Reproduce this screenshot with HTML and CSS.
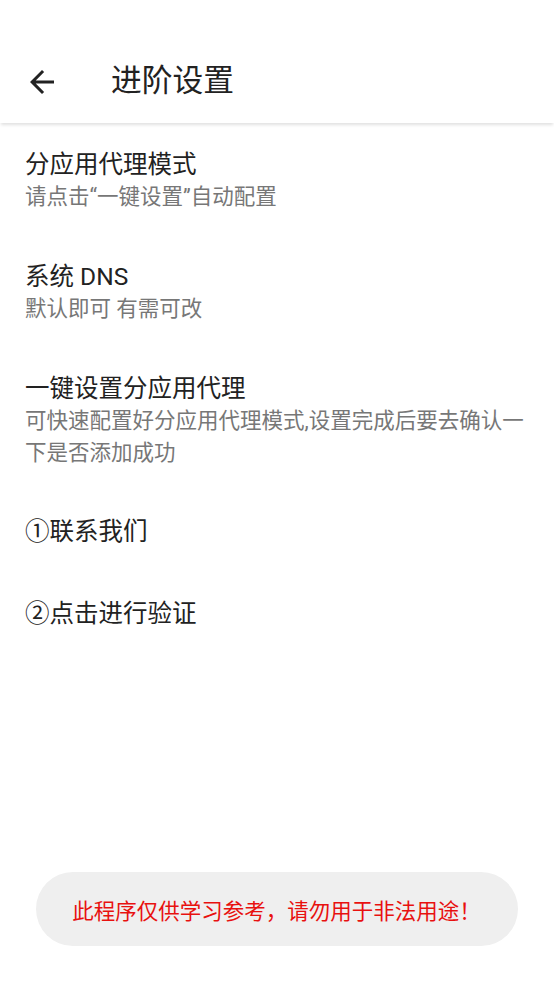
FILE: index.html
```html
<html lang="zh-CN">
<head>
	<meta charset="UTF-8">
	<title>进阶设置</title>
	<link rel="stylesheet" href="styles.css">
</head>
<body>
	<div class="status-bar"></div>
	<div class="toolbar">
		<div class="back">
			<svg width="36" height="36" viewBox="0 0 24 24"><path d="M20 11H7.83l5.59-5.59L12 4l-8 8 8 8 1.41-1.41L7.83 13H20v-2z" fill="#222"/></svg>
		</div>
		<div class="toolbar-title">进阶设置</div>
	</div>

	<div class="list">
		<div class="item">
			<div class="item-title">分应用代理模式</div>
			<div class="item-summary">请点击“一键设置”自动配置</div>
		</div>
		<div class="item">
			<div class="item-title">系统 DNS</div>
			<div class="item-summary">默认即可 有需可改</div>
		</div>
		<div class="item">
			<div class="item-title">一键设置分应用代理</div>
			<div class="item-summary">可快速配置好分应用代理模式,设置完成后要去确认一下是否添加成功</div>
		</div>
		<div class="item single">
			<div class="item-title">①联系我们</div>
		</div>
		<div class="item single">
			<div class="item-title">②点击进行验证</div>
		</div>
	</div>

	<div class="toast">此程序仅供学习参考，请勿用于非法用途！</div>
</body>
</html>
```

FILE: styles.css
```css
body{
	margin: 0;
	width: 554px;
	height: 984px;
	background: #fff;
	font-family: Roboto, "Noto Sans CJK SC", sans-serif;
	position: relative;
	overflow: hidden;
}

.status-bar{
	height: 39px;
}

.toolbar{
	height: 84px;
	display: flex;
	align-items: center;
	box-shadow: 0 3px 3px -1px rgba(0,0,0,0.12);
	position: relative;
}

.back{
	width: 36px;
	height: 36px;
	margin-left: 24px;
	margin-top: 2px;
}

.toolbar-title{
	margin-left: 51px;
	font-size: 30.75px;
	color: #222;
	line-height: 40px;
}

.item{
	padding: 26px 26px 22px 25px;
}

.item.single{
	padding: 25px 26px 25px 25px;
}

.item-title{
	font-size: 24.5px;
	line-height: 32px;
	color: #222;
}

.item-summary{
	font-size: 21.5px;
	line-height: 32px;
	color: #777;
}

.toast{
	position: absolute;
	left: 36px;
	top: 872px;
	width: 482px;
	height: 74px;
	border-radius: 37px;
	background: #efefef;
	color: #e8110f;
	font-size: 21.5px;
	display: flex;
	align-items: center;
	justify-content: center;
	padding-left: 0;
	padding-right: 1px;
	box-sizing: border-box;
}
```
